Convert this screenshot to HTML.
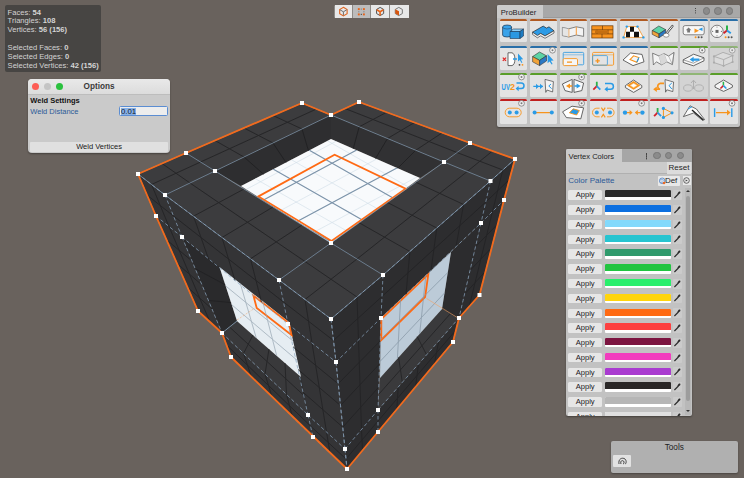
<!DOCTYPE html><html><head><meta charset="utf-8"><style>
*{margin:0;padding:0;box-sizing:border-box}
html,body{width:744px;height:478px;overflow:hidden;background:#69625d;font-family:"Liberation Sans",sans-serif}
.a{position:absolute}
.stats{left:5.2px;top:5.4px;width:96.3px;height:66.3px;background:#474543;border-radius:2px;color:#d4d4d4;font-size:7.6px;line-height:8.87px;padding:3.2px 0 0 2.4px;white-space:nowrap}
.stats b{font-weight:bold}
.win{border-radius:4px;overflow:hidden;box-shadow:0 1px 2px rgba(0,0,0,.35)}
.pbbtn{position:absolute;width:27.6px;height:23px;background:#e3e3e3;border-radius:1.5px;overflow:hidden}
.pbbtn i{position:absolute;left:0;top:0;width:100%;height:2px}
.row{position:absolute;left:2.5px;width:120px;height:10px}
.ap{position:absolute;left:0;top:0;width:34.3px;height:9.4px;background:#e6e6e6;border-radius:1.5px;font-size:7.6px;line-height:9.6px;text-align:center;color:#1a1a1a}
.sw{position:absolute;left:37px;top:0;width:66px;height:9.4px;background:#fff;border-radius:1px;overflow:hidden}
.sw i{position:absolute;left:0;top:0;width:100%;height:7px}
.ey{position:absolute;left:104.6px;top:-0.3px;width:9px;height:10px;background:#cbcbcb;border-radius:1px}
</style></head><body>
<svg width="744" height="478" viewBox="0 0 744 478" style="position:absolute;left:0;top:0">
<path d="M138.0,174.0 L186.0,153.0 L302.0,103.0 L331.0,115.0 L359.0,102.0 L470.0,143.0 L515.0,159.0 L490.5,181.0 L383.0,275.0 L331.0,319.0 L279.0,280.0 L165.0,195.0 Z M215.0,171.0 L331.0,115.0 L444.0,162.0 L331.0,243.0 Z" fill="#3c3c3e" fill-rule="evenodd"/>
<path d="M138.0,174.0 L165.0,195.0 L279.0,280.0 L331.0,319.0 L336.0,362.0 L345.0,449.0 L347.0,469.0 L313.0,437.0 L231.0,357.0 L222.0,333.0 L198.0,311.0 L156.0,216.0 Z M182.0,237.0 L288.0,324.0 L308.0,415.0 L222.0,333.0 Z" fill="#343436" fill-rule="evenodd"/>
<path d="M331.0,319.0 L383.0,275.0 L490.5,181.0 L515.0,159.0 L504.0,200.0 L479.5,295.0 L459.0,318.0 L453.0,342.0 L378.0,432.0 L347.0,469.0 L345.0,449.0 L336.0,362.0 Z M381.0,318.0 L481.0,223.0 L459.0,318.0 L378.0,410.0 Z" fill="#2d2d2f" fill-rule="evenodd"/>
<polygon points="215.0,171.0 331.0,115.0 331.0,139.0 241.0,186.0" fill="#2e2e30"/>
<polygon points="331.0,115.0 444.0,162.0 420.0,178.0 331.0,139.0" fill="#313133"/>
<clipPath id="fl"><polygon points="241.0,186.0 331.0,139.0 420.0,178.0 331.0,243.0"/></clipPath>
<polygon points="241.0,186.0 331.0,139.0 420.0,178.0 331.0,243.0" fill="#f8fafc"/>
<g clip-path="url(#fl)" stroke="#d0dde8" stroke-width="0.6">
<line x1="135.4" y1="149.8" x2="385.7" y2="292.6"/>
<line x1="135.4" y1="209.2" x2="385.7" y2="75.1"/>
<line x1="153.3" y1="140.3" x2="403.6" y2="283.1"/>
<line x1="153.3" y1="219.3" x2="403.6" y2="85.3"/>
<line x1="171.2" y1="130.7" x2="421.4" y2="273.5"/>
<line x1="171.2" y1="229.6" x2="421.4" y2="95.5"/>
<line x1="189.1" y1="121.1" x2="439.3" y2="263.9"/>
<line x1="189.1" y1="239.8" x2="439.3" y2="105.7"/>
<line x1="206.9" y1="111.5" x2="457.2" y2="254.3"/>
<line x1="206.9" y1="249.9" x2="457.2" y2="115.9"/>
<line x1="224.8" y1="102.0" x2="475.1" y2="244.8"/>
<line x1="224.8" y1="260.2" x2="475.1" y2="126.1"/>
<line x1="242.7" y1="92.4" x2="492.9" y2="235.2"/>
<line x1="242.7" y1="270.4" x2="492.9" y2="136.3"/>
<line x1="260.6" y1="82.8" x2="510.8" y2="225.6"/>
<line x1="260.6" y1="280.6" x2="510.8" y2="146.5"/>
<line x1="278.4" y1="73.2" x2="528.7" y2="216.0"/>
<line x1="278.4" y1="290.8" x2="528.7" y2="156.7"/>
<line x1="296.3" y1="63.7" x2="546.5" y2="206.5"/>
<line x1="296.3" y1="300.9" x2="546.5" y2="166.9"/>
<line x1="314.2" y1="54.1" x2="564.4" y2="196.9"/>
<line x1="314.2" y1="311.1" x2="564.4" y2="177.1"/>
<line x1="332.1" y1="44.5" x2="582.3" y2="187.3"/>
<line x1="332.1" y1="321.3" x2="582.3" y2="187.3"/>
</g>
<g clip-path="url(#fl)" stroke="#7b92a8" stroke-width="1.1">
<line x1="117.6" y1="159.4" x2="367.8" y2="302.2"/>
<line x1="117.6" y1="198.9" x2="367.8" y2="64.9"/>
<line x1="153.3" y1="140.3" x2="403.6" y2="283.1"/>
<line x1="153.3" y1="219.3" x2="403.6" y2="85.3"/>
<line x1="189.1" y1="121.1" x2="439.3" y2="263.9"/>
<line x1="189.1" y1="239.8" x2="439.3" y2="105.7"/>
<line x1="224.8" y1="102.0" x2="475.1" y2="244.8"/>
<line x1="224.8" y1="260.2" x2="475.1" y2="126.1"/>
<line x1="260.6" y1="82.8" x2="510.8" y2="225.6"/>
<line x1="260.6" y1="280.6" x2="510.8" y2="146.5"/>
<line x1="296.3" y1="63.7" x2="546.5" y2="206.5"/>
<line x1="296.3" y1="300.9" x2="546.5" y2="166.9"/>
</g>
<polygon points="258.5,196.4 334.6,154.8 405.6,188.7 331.5,241.0" fill="none" stroke="#ff6a14" stroke-width="1.8"/>
<polygon points="182.0,237.0 219.5,267.0 237.0,321.0 222.0,333.0" fill="#2a2a2c"/>
<polygon points="222.0,333.0 237.0,321.0 301.0,377.0 308.0,415.0" fill="#39393b"/>
<polygon points="288.0,324.0 308.0,415.0 301.0,377.0 289.0,322.0" fill="#2e2e30"/>
<polygon points="219.5,267.0 289.0,322.0 301.0,377.0 237.0,321.0" fill="#e6edf2"/>
<polygon points="253.5,295.8 288.8,323.0 291.5,335.0 256.7,308.0" fill="none" stroke="#ff6a14" stroke-width="1.8"/>
<polygon points="451.0,252.0 481.0,223.0 459.0,318.0 442.0,309.0" fill="#2c2c2e"/>
<polygon points="380.0,378.0 442.0,309.0 459.0,318.0 378.0,410.0" fill="#3a3a3c"/>
<polygon points="381.0,318.0 451.0,252.0 442.0,309.0 380.0,378.0" fill="#bccbd8"/>
<polygon points="381.3,319.0 428.3,274.4 425.1,297.0 381.3,340.0" fill="none" stroke="#ff6a14" stroke-width="1.8"/>
<g stroke="#9aa8b4" stroke-width="0.9" opacity="0.8"><line x1="240.3" y1="283.5" x2="256.2" y2="337.8"/><line x1="262.6" y1="301.1" x2="276.7" y2="355.7"/><line x1="225.6" y1="285.9" x2="293.2" y2="341.2"/><line x1="231.8" y1="304.8" x2="297.4" y2="360.5"/></g>
<g stroke="#8797a6" stroke-width="0.9" opacity="0.8"><line x1="400.6" y1="299.5" x2="397.4" y2="358.7"/><line x1="425.8" y1="275.8" x2="419.7" y2="333.8"/><line x1="380.6" y1="339.6" x2="447.8" y2="272.5"/><line x1="380.3" y1="361.2" x2="444.5" y2="293.0"/></g>
<g stroke="#1f1f21" stroke-width="1" opacity="0.8"><line x1="244.0" y1="157.0" x2="263.5" y2="174.2"/><line x1="273.0" y1="143.0" x2="286.0" y2="162.5"/><line x1="302.0" y1="129.0" x2="308.5" y2="150.8"/><line x1="359.2" y1="126.8" x2="353.2" y2="148.8"/><line x1="387.5" y1="138.5" x2="375.5" y2="158.5"/><line x1="415.8" y1="150.2" x2="397.8" y2="168.2"/></g>
<g stroke="#1f1f21" stroke-width="1" opacity="0.7"><line x1="253.0" y1="335.0" x2="243.5" y2="353.5"/><line x1="269.0" y1="349.0" x2="265.0" y2="374.0"/><line x1="285.0" y1="363.0" x2="286.5" y2="394.5"/><line x1="229.5" y1="327.0" x2="304.5" y2="396.0"/><line x1="398.6" y1="357.3" x2="402.3" y2="382.4"/><line x1="417.2" y1="336.6" x2="426.6" y2="354.8"/><line x1="379.0" y1="394.0" x2="450.5" y2="313.5"/><line x1="195.2" y1="268.7" x2="225.3" y2="284.8"/><line x1="208.4" y1="300.4" x2="231.1" y2="302.6"/></g>
<line x1="237" y1="320" x2="255" y2="308" stroke="#f7a060" stroke-width=".7" stroke-dasharray="2 1.5" opacity=".7"/>
<line x1="426.5" y1="298.5" x2="459" y2="318.6" stroke="#f7a060" stroke-width=".7" opacity=".8"/>
<g stroke="#242426" stroke-width="1" opacity="0.9"><line x1="162.0" y1="163.5" x2="190.0" y2="183.0"/><line x1="151.5" y1="184.5" x2="200.5" y2="162.0"/><line x1="215.0" y1="140.5" x2="244.0" y2="157.0"/><line x1="244.0" y1="128.0" x2="273.0" y2="143.0"/><line x1="273.0" y1="115.5" x2="302.0" y2="129.0"/><line x1="200.5" y1="162.0" x2="316.5" y2="109.0"/><line x1="190.0" y1="183.0" x2="305.0" y2="261.5"/><line x1="193.5" y1="216.2" x2="244.0" y2="189.0"/><line x1="222.0" y1="237.5" x2="273.0" y2="207.0"/><line x1="250.5" y1="258.8" x2="302.0" y2="225.0"/><line x1="345.0" y1="108.5" x2="457.0" y2="152.5"/><line x1="359.2" y1="126.8" x2="386.8" y2="112.2"/><line x1="387.5" y1="138.5" x2="414.5" y2="122.5"/><line x1="415.8" y1="150.2" x2="442.2" y2="132.8"/><line x1="305.0" y1="261.5" x2="357.0" y2="297.0"/><line x1="305.0" y1="299.5" x2="357.0" y2="259.0"/><line x1="359.2" y1="222.8" x2="409.9" y2="251.5"/><line x1="387.5" y1="202.5" x2="436.8" y2="228.0"/><line x1="415.8" y1="182.2" x2="463.6" y2="204.5"/><line x1="357.0" y1="259.0" x2="467.2" y2="171.5"/><line x1="457.0" y1="152.5" x2="502.8" y2="170.0"/><line x1="467.2" y1="171.5" x2="492.5" y2="151.0"/><line x1="151.5" y1="184.5" x2="169.0" y2="226.5"/><line x1="147.0" y1="195.0" x2="173.5" y2="216.0"/><line x1="193.5" y1="216.2" x2="208.5" y2="258.8"/><line x1="222.0" y1="237.5" x2="235.0" y2="280.5"/><line x1="250.5" y1="258.8" x2="261.5" y2="302.2"/><line x1="173.5" y1="216.0" x2="283.5" y2="302.0"/><line x1="305.0" y1="299.5" x2="312.0" y2="343.0"/><line x1="283.5" y1="302.0" x2="333.5" y2="340.5"/><line x1="169.0" y1="226.5" x2="210.0" y2="322.0"/><line x1="166.5" y1="239.8" x2="192.0" y2="261.0"/><line x1="177.0" y1="263.5" x2="202.0" y2="285.0"/><line x1="187.5" y1="287.2" x2="212.0" y2="309.0"/><line x1="312.0" y1="343.0" x2="326.5" y2="432.0"/><line x1="293.0" y1="346.8" x2="338.2" y2="383.8"/><line x1="298.0" y1="369.5" x2="340.5" y2="405.5"/><line x1="303.0" y1="392.2" x2="342.8" y2="427.2"/><line x1="243.5" y1="353.5" x2="251.5" y2="377.0"/><line x1="265.0" y1="374.0" x2="272.0" y2="397.0"/><line x1="286.5" y1="394.5" x2="292.5" y2="417.0"/><line x1="226.5" y1="345.0" x2="310.5" y2="426.0"/><line x1="326.5" y1="432.0" x2="330.0" y2="453.0"/><line x1="310.5" y1="426.0" x2="346.0" y2="459.0"/><line x1="357.0" y1="297.0" x2="358.5" y2="340.0"/><line x1="333.5" y1="340.5" x2="382.0" y2="296.5"/><line x1="409.9" y1="251.5" x2="406.0" y2="294.2"/><line x1="436.8" y1="228.0" x2="431.0" y2="270.5"/><line x1="463.6" y1="204.5" x2="456.0" y2="246.8"/><line x1="382.0" y1="296.5" x2="485.8" y2="202.0"/><line x1="502.8" y1="170.0" x2="492.5" y2="211.5"/><line x1="485.8" y1="202.0" x2="509.5" y2="179.5"/><line x1="358.5" y1="340.0" x2="361.5" y2="429.5"/><line x1="338.2" y1="383.8" x2="380.2" y2="341.0"/><line x1="340.5" y1="405.5" x2="379.5" y2="364.0"/><line x1="342.8" y1="427.2" x2="378.8" y2="387.0"/><line x1="492.5" y1="211.5" x2="469.2" y2="306.5"/><line x1="475.5" y1="246.8" x2="497.9" y2="223.8"/><line x1="470.0" y1="270.5" x2="491.8" y2="247.5"/><line x1="464.5" y1="294.2" x2="485.6" y2="271.2"/><line x1="361.5" y1="429.5" x2="362.5" y2="450.5"/><line x1="346.0" y1="459.0" x2="378.0" y2="421.0"/><line x1="398.2" y1="387.0" x2="396.8" y2="409.5"/><line x1="418.5" y1="364.0" x2="415.5" y2="387.0"/><line x1="438.8" y1="341.0" x2="434.2" y2="364.5"/><line x1="378.0" y1="421.0" x2="456.0" y2="330.0"/></g>
<g stroke="#87a2bb" stroke-width="0.9" opacity="0.7"><line x1="138.0" y1="174.0" x2="186.0" y2="153.0"/><line x1="186.0" y1="153.0" x2="302.0" y2="103.0"/><line x1="165.0" y1="195.0" x2="215.0" y2="171.0"/><line x1="215.0" y1="171.0" x2="331.0" y2="115.0"/><line x1="331.0" y1="115.0" x2="359.0" y2="102.0"/><line x1="279.0" y1="280.0" x2="331.0" y2="243.0"/><line x1="331.0" y1="243.0" x2="444.0" y2="162.0"/><line x1="444.0" y1="162.0" x2="470.0" y2="143.0"/><line x1="331.0" y1="319.0" x2="383.0" y2="275.0"/><line x1="383.0" y1="275.0" x2="490.5" y2="181.0"/><line x1="490.5" y1="181.0" x2="515.0" y2="159.0"/><line x1="138.0" y1="174.0" x2="165.0" y2="195.0"/><line x1="165.0" y1="195.0" x2="279.0" y2="280.0"/><line x1="279.0" y1="280.0" x2="331.0" y2="319.0"/><line x1="186.0" y1="153.0" x2="215.0" y2="171.0"/><line x1="215.0" y1="171.0" x2="331.0" y2="243.0"/><line x1="331.0" y1="243.0" x2="383.0" y2="275.0"/><line x1="302.0" y1="103.0" x2="331.0" y2="115.0"/><line x1="331.0" y1="115.0" x2="444.0" y2="162.0"/><line x1="444.0" y1="162.0" x2="490.5" y2="181.0"/><line x1="359.0" y1="102.0" x2="470.0" y2="143.0"/><line x1="470.0" y1="143.0" x2="515.0" y2="159.0"/></g>
<g stroke="#8aa5bf" stroke-width="0.9" opacity="0.8" stroke-dasharray="3.5 2.5"><line x1="138.0" y1="174.0" x2="165.0" y2="195.0"/><line x1="165.0" y1="195.0" x2="279.0" y2="280.0"/><line x1="279.0" y1="280.0" x2="331.0" y2="319.0"/><line x1="156.0" y1="216.0" x2="182.0" y2="237.0"/><line x1="182.0" y1="237.0" x2="288.0" y2="324.0"/><line x1="288.0" y1="324.0" x2="336.0" y2="362.0"/><line x1="198.0" y1="311.0" x2="222.0" y2="333.0"/><line x1="222.0" y1="333.0" x2="308.0" y2="415.0"/><line x1="308.0" y1="415.0" x2="345.0" y2="449.0"/><line x1="231.0" y1="357.0" x2="313.0" y2="437.0"/><line x1="313.0" y1="437.0" x2="347.0" y2="469.0"/><line x1="138.0" y1="174.0" x2="156.0" y2="216.0"/><line x1="156.0" y1="216.0" x2="198.0" y2="311.0"/><line x1="165.0" y1="195.0" x2="182.0" y2="237.0"/><line x1="182.0" y1="237.0" x2="222.0" y2="333.0"/><line x1="222.0" y1="333.0" x2="231.0" y2="357.0"/><line x1="279.0" y1="280.0" x2="288.0" y2="324.0"/><line x1="288.0" y1="324.0" x2="308.0" y2="415.0"/><line x1="308.0" y1="415.0" x2="313.0" y2="437.0"/><line x1="331.0" y1="319.0" x2="336.0" y2="362.0"/><line x1="336.0" y1="362.0" x2="345.0" y2="449.0"/><line x1="345.0" y1="449.0" x2="347.0" y2="469.0"/><line x1="331.0" y1="319.0" x2="383.0" y2="275.0"/><line x1="383.0" y1="275.0" x2="490.5" y2="181.0"/><line x1="490.5" y1="181.0" x2="515.0" y2="159.0"/><line x1="336.0" y1="362.0" x2="381.0" y2="318.0"/><line x1="381.0" y1="318.0" x2="481.0" y2="223.0"/><line x1="481.0" y1="223.0" x2="504.0" y2="200.0"/><line x1="345.0" y1="449.0" x2="378.0" y2="410.0"/><line x1="378.0" y1="410.0" x2="459.0" y2="318.0"/><line x1="459.0" y1="318.0" x2="479.5" y2="295.0"/><line x1="347.0" y1="469.0" x2="378.0" y2="432.0"/><line x1="378.0" y1="432.0" x2="453.0" y2="342.0"/><line x1="331.0" y1="319.0" x2="336.0" y2="362.0"/><line x1="336.0" y1="362.0" x2="345.0" y2="449.0"/><line x1="345.0" y1="449.0" x2="347.0" y2="469.0"/><line x1="383.0" y1="275.0" x2="381.0" y2="318.0"/><line x1="381.0" y1="318.0" x2="378.0" y2="410.0"/><line x1="378.0" y1="410.0" x2="378.0" y2="432.0"/><line x1="490.5" y1="181.0" x2="481.0" y2="223.0"/><line x1="481.0" y1="223.0" x2="459.0" y2="318.0"/><line x1="459.0" y1="318.0" x2="453.0" y2="342.0"/><line x1="515.0" y1="159.0" x2="504.0" y2="200.0"/><line x1="504.0" y1="200.0" x2="479.5" y2="295.0"/></g>
<line x1="222" y1="333" x2="237" y2="321" stroke="#87a2bb" stroke-width="1" opacity=".8"/>
<polygon points="138.0,174.0 186.0,153.0 302.0,103.0 331.0,115.0 359.0,102.0 470.0,143.0 515.0,159.0 504.0,200.0 479.5,295.0 459.0,318.0 453.0,342.0 347.0,469.0 231.0,357.0 222.0,333.0 198.0,311.0 156.0,216.0" fill="none" stroke="#f26a1c" stroke-width="1.8" stroke-linejoin="round"/>
<g fill="#ffffff"><rect x="136.0" y="172.0" width="4" height="4"/><rect x="184.0" y="151.0" width="4" height="4"/><rect x="300.0" y="101.0" width="4" height="4"/><rect x="329.0" y="113.0" width="4" height="4"/><rect x="357.0" y="100.0" width="4" height="4"/><rect x="468.0" y="141.0" width="4" height="4"/><rect x="513.0" y="157.0" width="4" height="4"/><rect x="502.0" y="198.0" width="4" height="4"/><rect x="477.5" y="293.0" width="4" height="4"/><rect x="457.0" y="316.0" width="4" height="4"/><rect x="451.0" y="340.0" width="4" height="4"/><rect x="345.0" y="467.0" width="4" height="4"/><rect x="229.0" y="355.0" width="4" height="4"/><rect x="220.0" y="331.0" width="4" height="4"/><rect x="196.0" y="309.0" width="4" height="4"/><rect x="154.0" y="214.0" width="4" height="4"/><rect x="163.0" y="193.0" width="4" height="4"/><rect x="213.0" y="169.0" width="4" height="4"/><rect x="442.0" y="160.0" width="4" height="4"/><rect x="329.0" y="241.0" width="4" height="4"/><rect x="277.0" y="278.0" width="4" height="4"/><rect x="329.0" y="317.0" width="4" height="4"/><rect x="381.0" y="273.0" width="4" height="4"/><rect x="488.5" y="179.0" width="4" height="4"/><rect x="180.0" y="235.0" width="4" height="4"/><rect x="286.0" y="322.0" width="4" height="4"/><rect x="334.0" y="360.0" width="4" height="4"/><rect x="306.0" y="413.0" width="4" height="4"/><rect x="343.0" y="447.0" width="4" height="4"/><rect x="311.0" y="435.0" width="4" height="4"/><rect x="379.0" y="316.0" width="4" height="4"/><rect x="479.0" y="221.0" width="4" height="4"/><rect x="376.0" y="408.0" width="4" height="4"/><rect x="376.0" y="430.0" width="4" height="4"/></g>
</svg>
<div class="a stats"><div>Faces: <b>54</b></div><div>Triangles: <b>108</b></div><div>Vertices: <b>56 (156)</b></div><div>&nbsp;</div><div>Selected Faces: <b>0</b></div><div>Selected Edges: <b>0</b></div><div>Selected Vertices: <b>42 (156)</b></div></div>
<div class="a win" style="left:28px;top:78.5px;width:142px;height:74.5px;background:#cacaca">
 <div class="a" style="left:0;top:0;width:142px;height:16px;background:linear-gradient(#e9e9e9,#dcdcdc);border-bottom:1px solid #bdbdbd"></div>
 <div class="a" style="left:4.2px;top:4.1px;width:7px;height:7px;border-radius:50%;background:#fd5d55"></div>
 <div class="a" style="left:16px;top:4.1px;width:7px;height:7px;border-radius:50%;background:#c4c4c4"></div>
 <div class="a" style="left:28.1px;top:4.1px;width:7px;height:7px;border-radius:50%;background:#2ac13e"></div>
 <div class="a" style="left:0;top:3.4px;width:142px;text-align:center;font-size:8.2px;font-weight:bold;color:#3a3a3a;padding-left:0">Options</div>
 <div class="a" style="left:2.3px;top:17.4px;font-size:7.5px;font-weight:bold;color:#111">Weld Settings</div>
 <div class="a" style="left:2.3px;top:28.6px;font-size:7.5px;color:#2c5a98">Weld Distance</div>
 <div class="a" style="left:91.4px;top:27.6px;width:49px;height:10.1px;background:#ededed;border:1px solid #5b8dd2;border-radius:1.5px"></div>
 <div class="a" style="left:93px;top:29.3px;width:14.5px;height:7px;background:#87b0e6"></div>
 <div class="a" style="left:93px;top:28.3px;font-size:7.8px;color:#101828">0.01</div>
 <div class="a" style="left:1.7px;top:63.5px;width:138.7px;height:9.7px;background:#e0e0e0;border-radius:1px;text-align:center;font-size:7.5px;line-height:10.4px;color:#1a1a1a">Weld Vertices</div>
</div>
<div class="a" style="left:333.8px;top:4.8px;width:75.6px;height:13.6px;background:#8e8a86;border-radius:1.5px"></div><div class="a" style="left:334.5px;top:5.4px;width:17.5px;height:12.4px;background:#e8e8e8"></div><div class="a" style="left:352.6px;top:5.4px;width:17.8px;height:12.4px;background:#bcbcbc"></div><div class="a" style="left:371.0px;top:5.4px;width:18.2px;height:12.4px;background:#e8e8e8"></div><div class="a" style="left:390.2px;top:5.4px;width:18.6px;height:12.4px;background:#e8e8e8"></div><svg class="a" style="left:0;top:0" width="420" height="22" viewBox="0 0 420 22"><path d="M343.40 7.30 L347.12 9.45 L347.12 13.75 L343.40 15.90 L339.68 13.75 L339.68 9.45 Z" fill="none" stroke="#e0641e" stroke-width="1.1"/><path d="M343.4 11.8 V15.4 M343.4 11.8 L340 9.8 M343.4 11.8 L346.8 9.8" stroke="#6f6f6f" stroke-width="1"/><rect x="357.85" y="8.15" width="1.9" height="1.9" fill="#e8641a"/><rect x="362.95" y="8.15" width="1.9" height="1.9" fill="#e8641a"/><rect x="357.85" y="13.45" width="1.9" height="1.9" fill="#e8641a"/><rect x="362.95" y="13.45" width="1.9" height="1.9" fill="#e8641a"/><rect x="360.75" y="8.50" width="1.2" height="1.2" fill="#8a8a8a"/><rect x="358.20" y="11.15" width="1.2" height="1.2" fill="#8a8a8a"/><rect x="363.30" y="11.15" width="1.2" height="1.2" fill="#8a8a8a"/><rect x="360.75" y="13.80" width="1.2" height="1.2" fill="#555"/><path d="M380.10 7.40 L383.65 9.45 L383.65 13.55 L380.10 15.60 L376.55 13.55 L376.55 9.45 Z" fill="none" stroke="#555" stroke-width="1"/><path d="M380.1 11.8 V15.4 M380.1 11.8 L376.8 9.8 M380.1 11.8 L383.4 9.8" stroke="#e8641a" stroke-width="1.6"/><path d="M398.80 7.40 L402.35 9.45 L402.35 13.55 L398.80 15.60 L395.25 13.55 L395.25 9.45 Z" fill="none" stroke="#777" stroke-width="1"/><path d="M395.3 9.2 L399 11.2 V15.4 L395.3 13.4 Z" fill="#d9560e"/></svg>
<div class="a win" style="left:497px;top:5px;width:243px;height:122px;background:#c2c2c2;border-radius:2px"><div class="a" style="left:0;top:0;width:243px;height:12.5px;background:#a8a8a8;border-bottom:1px solid #9a9a9a"></div><div class="a" style="left:0;top:0;width:46px;height:13px;background:#cbcbcb;font-size:7.6px;line-height:15px;padding-left:3.8px;color:#1e1e1e">ProBuilder</div><div class="a" style="left:198.2px;top:3px;width:1.2px;height:1.2px;background:#444;box-shadow:0 2.2px #444,0 4.4px #444"></div><div class="a" style="left:205.5px;top:2.2px;width:7.4px;height:7.4px;border-radius:50%;background:#8b8b8b;border:.6px solid #777"></div><div class="a" style="left:217.3px;top:2.2px;width:7.4px;height:7.4px;border-radius:50%;background:#8b8b8b;border:.6px solid #777"></div><div class="a" style="left:229.0px;top:2.2px;width:7.4px;height:7.4px;border-radius:50%;background:#8b8b8b;border:.6px solid #777"></div><div class="pbbtn" style="left:2.6px;top:14.3px;height:23.1px;background:#e3e3e3"><i style="background:#b05a22;opacity:1"></i><svg width="28" height="23" viewBox="0 0 28 23" style="position:absolute;left:0;top:0;opacity:1"><path d="M2.6 8 A4.5 2 0 0 1 11.6 8 V16 A4.5 2 0 0 1 2.6 16 Z" fill="#3aa3ea" stroke="#1d3550" stroke-width=".7"/><path d="M2.6 8 A4.5 2 0 0 0 11.6 8" fill="none" stroke="#1d3550" stroke-width=".5"/><path d="M10 12.5 L13.5 10 L23.5 10 L20 12.5 Z" fill="#8fd0f7" stroke="#1d3550" stroke-width=".6"/><path d="M10 12.5 H20 V19.5 H10 Z" fill="#2a98e2" stroke="#1d3550" stroke-width=".6"/><path d="M20 12.5 L23.5 10 V17 L20 19.5 Z" fill="#1e7cc2" stroke="#1d3550" stroke-width=".6"/></svg></div><div class="pbbtn" style="left:32.7px;top:14.3px;height:23.1px;background:#e3e3e3"><i style="background:#b05a22;opacity:1"></i><svg width="28" height="23" viewBox="0 0 28 23" style="position:absolute;left:0;top:0;opacity:1"><path d="M2.5 13.2 L13.2 7.1 L16.5 9.1 L19 7.8 L24 11.8 L15 17 L10.7 14.5 L7.4 16.6 Z" fill="#2d9be6" stroke="#2a2a2a" stroke-width=".7"/><path d="M2.5 13.2 L7.4 16.6 L10.7 14.5 L15 17 L24 11.8 L24 14 L15 19.3 L10.7 16.8 L7.4 18.8 L2.5 15.4 Z" fill="#f4f4f4" stroke="#2a2a2a" stroke-width=".6"/></svg></div><div class="pbbtn" style="left:62.8px;top:14.3px;height:23.1px;background:#e3e3e3"><i style="background:#b05a22;opacity:1"></i><svg width="28" height="23" viewBox="0 0 28 23" style="position:absolute;left:0;top:0;opacity:1"><path d="M2.4 8.4 L8.8 9.8 L16.3 7.8 L23.6 9.2 L23.6 17.4 L16.3 16 L8.8 18 L2.4 16.6 Z" fill="#f3f3f3" stroke="#555" stroke-width=".7"/><path d="M8.8 9.8 V18 M16.3 7.8 V16" stroke="#f79a3a" stroke-width="1"/><path d="M2.4 8.4 L8.8 9.8 V18 L2.4 16.6 Z" fill="#dcdcdc" opacity=".6"/></svg></div><div class="pbbtn" style="left:92.9px;top:14.3px;height:23.1px;background:#e3e3e3"><i style="background:#b05a22;opacity:1"></i><svg width="28" height="23" viewBox="0 0 28 23" style="position:absolute;left:0;top:0;opacity:1"><rect x="1.8" y="6.8" width="21.2" height="12.2" fill="#f7931e" stroke="#6a3a08" stroke-width=".7"/><path d="M1.8 10.8 H23 M1.8 14.9 H23 M12.5 6.8 V10.8 M18 10.8 V14.9 M7 10.8 V14.9 M12 14.9 V19" stroke="#6a3a08" stroke-width=".7"/><rect x="5" y="11.3" width="12.5" height="3" fill="#c46e10"/></svg></div><div class="pbbtn" style="left:123.0px;top:14.3px;height:23.1px;background:#e3e3e3"><i style="background:#b05a22;opacity:1"></i><svg width="28" height="23" viewBox="0 0 28 23" style="position:absolute;left:0;top:0;opacity:1"><path d="M6.8 7.6 L17.5 7.6 L23.4 18.4 L3.6 18.4 Z" fill="#fff" stroke="#f19a3a" stroke-width=".9"/><path d="M10 7.8 H14 V12.8 H10 Z M6 12.8 H10 V18.3 H6 Z M14 12.8 H19 V18.3 H14 Z" fill="#111"/><g fill="#2a9be6"><circle cx="6.8" cy="7.6" r="1.2"/><circle cx="17.5" cy="7.6" r="1.2"/><circle cx="3.6" cy="18.4" r="1.2"/><circle cx="23.4" cy="18.4" r="1.2"/></g></svg></div><div class="pbbtn" style="left:153.1px;top:14.3px;height:23.1px;background:#e3e3e3"><i style="background:#b05a22;opacity:1"></i><svg width="28" height="23" viewBox="0 0 28 23" style="position:absolute;left:0;top:0;opacity:1"><path d="M2.2 11.5 L8.8 7 L15.6 10.6 L9 15 Z" fill="#5cd3a5" stroke="#333" stroke-width=".6"/><path d="M2.2 11.5 L9 15 V18.8 L2.2 15.3 Z" fill="#f0a33a" stroke="#333" stroke-width=".6"/><path d="M15.6 10.6 L9 15 V18.8 L15.6 14.4 Z" fill="#2a78c4" stroke="#333" stroke-width=".6"/><path d="M16 15 L22.5 7" stroke="#444" stroke-width="2.2" stroke-linecap="round"/><path d="M16 15 L22.5 7" stroke="#fff" stroke-width="1" stroke-linecap="round"/><ellipse cx="16.2" cy="16.2" rx="2.8" ry="2" fill="#fff" stroke="#555" stroke-width=".6"/></svg></div><div class="pbbtn" style="left:183.2px;top:14.3px;height:23.1px;background:#e3e3e3"><i style="background:#2a6fa8;opacity:1"></i><svg width="28" height="23" viewBox="0 0 28 23" style="position:absolute;left:0;top:0;opacity:1"><rect x="3.2" y="6.6" width="21" height="9.2" rx="2" fill="#f7f7f7" stroke="#555" stroke-width=".7"/><path d="M8.6 8.5 L11.4 11.2 H10 V13.4 H7.2 V11.2 H5.8 Z" fill="#777"/><path d="M14.5 9.5 L19 11.8 L14.5 14 Z" fill="#f7941d"/><path d="M22.5 8.6 L18.5 10.3 L22.5 12 Z" fill="#2a9be6"/><circle cx="15.6" cy="18.2" r="1" fill="#f7941d"/><circle cx="18.6" cy="18.2" r="1" fill="#555"/><circle cx="21.6" cy="18.2" r="1" fill="#555"/></svg></div><div class="pbbtn" style="left:213.3px;top:14.3px;height:23.1px;background:#e3e3e3"><i style="background:#2a6fa8;opacity:1"></i><svg width="28" height="23" viewBox="0 0 28 23" style="position:absolute;left:0;top:0;opacity:1"><circle cx="7" cy="12.4" r="6.2" fill="#f6f6f6" stroke="#555" stroke-width=".7"/><rect x="5.5" y="10.9" width="3" height="3" fill="#666"/><g fill="#777"><circle cx="7" cy="8" r=".6"/><circle cx="7" cy="16.8" r=".6"/><circle cx="2.6" cy="12.4" r=".6"/><circle cx="11.4" cy="12.4" r=".6"/></g><path d="M17 11.5 L17 6.5" stroke="#2bb24a" stroke-width="2"/><path d="M17 11.5 L13.6 14.2" stroke="#d2232a" stroke-width="2"/><path d="M17 11.5 L20.8 14.2" stroke="#2a9be6" stroke-width="2"/><circle cx="15.6" cy="18.2" r="1" fill="#f7941d"/><circle cx="18.6" cy="18.2" r="1" fill="#555"/><circle cx="21.6" cy="18.2" r="1" fill="#555"/></svg></div><div class="pbbtn" style="left:2.6px;top:41.0px;height:23.8px;background:#e3e3e3"><i style="background:#2a6fa8;opacity:1"></i><svg width="28" height="23" viewBox="0 0 28 23" style="position:absolute;left:0;top:0;opacity:1"><path d="M2.8 11.6 L6 14.9 M6 11.6 L2.8 14.9" stroke="#e02828" stroke-width="1.3"/><path d="M8 6.8 L12 6.8 A3.5 6.5 0 0 1 12 19.6 L8 19.6 Z" fill="#fff" stroke="#444" stroke-width=".8"/><path d="M13 13 H17" stroke="#2a9be6" stroke-width="1.3"/><path d="M18 7.4 L18 15.6 L19.8 14 L21.6 17 L22.4 16.5 L20.8 13.6 L23.2 13.2 Z" fill="#2a9be6"/><circle cx="19.5" cy="18.8" r=".9" fill="#444"/><circle cx="22.5" cy="18.8" r=".9" fill="#f7941d"/></svg></div><div class="pbbtn" style="left:32.7px;top:41.0px;height:23.8px;background:#e3e3e3"><i style="background:#2a6fa8;opacity:1"></i><svg width="28" height="23" viewBox="0 0 28 23" style="position:absolute;left:0;top:0;opacity:1"><path d="M2.6 10.6 L9.5 6 L16.5 9.8 L9.6 14.4 Z" fill="#5cd3a5" stroke="#333" stroke-width=".6"/><path d="M2.6 10.6 L9.6 14.4 V19.6 L2.6 15.8 Z" fill="#f0a33a" stroke="#333" stroke-width=".6"/><path d="M16.5 9.8 L9.6 14.4 V19.6 L16.5 15 Z" fill="#2a78c4" stroke="#333" stroke-width=".6"/><path d="M17.6 8 L17.6 17.2 L19.6 15.4 L21.6 18.6 L22.6 18 L20.8 14.8 L23.6 14.6 Z" fill="#2a9be6"/><circle cx="22.5" cy="4.2" r="2.9" fill="#f2f2f2" stroke="#7a7a7a" stroke-width=".8"/><circle cx="22.5" cy="4.2" r="1" fill="#7a7a7a"/></svg></div><div class="pbbtn" style="left:62.8px;top:41.0px;height:23.8px;background:#e3e3e3"><i style="background:#2a6fa8;opacity:1"></i><svg width="28" height="23" viewBox="0 0 28 23" style="position:absolute;left:0;top:0;opacity:1"><rect x="3.2" y="6.4" width="20.5" height="12.4" rx="1" fill="none" stroke="#3a9de0" stroke-width=".9"/><path d="M3.2 8.8 H23.7" stroke="#3a9de0" stroke-width=".5"/><rect x="3.2" y="12.6" width="14.3" height="7" rx="1.2" fill="#f6f6f6" stroke="#f7941d" stroke-width=".9"/><path d="M7 16.1 H12" stroke="#f7941d" stroke-width="1.4"/></svg></div><div class="pbbtn" style="left:92.9px;top:41.0px;height:23.8px;background:#e3e3e3"><i style="background:#2a6fa8;opacity:1"></i><svg width="28" height="23" viewBox="0 0 28 23" style="position:absolute;left:0;top:0;opacity:1"><rect x="2.6" y="6.4" width="21" height="12.8" rx="1" fill="none" stroke="#f7941d" stroke-width=".9"/><path d="M2.6 8.8 H23.6" stroke="#f7941d" stroke-width=".5"/><rect x="2.6" y="9.6" width="14.8" height="9.6" rx="1" fill="none" stroke="#3a9de0" stroke-width=".8"/><path d="M5.4 14.9 H9.8 M7.6 12.7 V17.1" stroke="#f7941d" stroke-width="1.4"/></svg></div><div class="pbbtn" style="left:123.0px;top:41.0px;height:23.8px;background:#e3e3e3"><i style="background:#2a6fa8;opacity:1"></i><svg width="28" height="23" viewBox="0 0 28 23" style="position:absolute;left:0;top:0;opacity:1"><path d="M3 14 L10.5 7 L22 8.4 L24 15.8 L13 19.6 Z" fill="#fff" stroke="#444" stroke-width=".8"/><path d="M10 13.6 L13.6 9.8 L18.8 11.6 L16.8 16.2 Z" fill="#f0f6fb" stroke="#f7941d" stroke-width="1.1"/><path d="M16.8 16.2 L18.8 11.6 L18.2 13.8 Z" fill="#2a9be6" stroke="#2a9be6" stroke-width=".8"/></svg></div><div class="pbbtn" style="left:153.1px;top:41.0px;height:23.8px;background:#e3e3e3"><i style="background:#5a9e2a;opacity:1"></i><svg width="28" height="23" viewBox="0 0 28 23" style="position:absolute;left:0;top:0;opacity:1"><path d="M2.6 7.2 L9 10 L14 7.6 L18.6 10 L24 6.4 L22.4 18.6 L16.8 15.8 L11.6 18.8 L6.4 15.8 L3.4 19 Z" fill="#f4f4f4" stroke="#555" stroke-width=".7"/><path d="M9 10 L11.6 18.8 M14 7.6 L16.8 15.8 M18.6 10 L22.4 18.6 L24 6.4" stroke="#888" stroke-width=".5" fill="none"/><path d="M9 10 L14 7.6 L16.8 15.8 L11.6 18.8 Z" fill="#d8d8d8"/></svg></div><div class="pbbtn" style="left:183.2px;top:41.0px;height:23.8px;background:#e3e3e3"><i style="background:#5a9e2a;opacity:1"></i><svg width="28" height="23" viewBox="0 0 28 23" style="position:absolute;left:0;top:0;opacity:1"><path d="M3.2 13.8 L13.6 8.2 L24 11.8 L24 14.8 L13.4 19.8 L3.2 16.4 Z" fill="#f8f8f8" stroke="#444" stroke-width=".8"/><path d="M3.2 13.8 L13.4 17.2 L24 11.8" fill="none" stroke="#444" stroke-width=".5"/><path d="M9.6 13.4 L13.6 10.8 V12.4 H19.4 V14.8 H13.6 V16.2 Z" fill="#2a9be6"/><circle cx="22.2" cy="4.2" r="2.9" fill="#f2f2f2" stroke="#7a7a7a" stroke-width=".8"/><circle cx="22.2" cy="4.2" r="1" fill="#7a7a7a"/></svg></div><div class="pbbtn" style="left:213.3px;top:41.0px;height:23.8px;background:#d3d3d3"><i style="background:#5a9e2a;opacity:0.55"></i><svg width="28" height="23" viewBox="0 0 28 23" style="position:absolute;left:0;top:0;opacity:0.7"><path d="M4 10.4 L13 6.4 L22.6 9.6 L22.6 16 L13.6 19.8 L4 16.6 Z" fill="#dedede" stroke="#9a9a9a" stroke-width=".9"/><path d="M4 10.4 L13.6 13.6 L22.6 9.6 M13.6 13.6 V19.8" fill="none" stroke="#9a9a9a" stroke-width=".9"/><g fill="#9a9a9a"><circle cx="4" cy="10.4" r="1.1"/><circle cx="22.6" cy="9.6" r="1.1"/><circle cx="4" cy="16.6" r="1.1"/><circle cx="22.6" cy="16" r="1.1"/><circle cx="13.6" cy="19.8" r="1.1"/></g><circle cx="22.2" cy="4.2" r="2.9" fill="#f2f2f2" stroke="#7a7a7a" stroke-width=".8"/><circle cx="22.2" cy="4.2" r="1" fill="#7a7a7a"/></svg></div><div class="pbbtn" style="left:2.6px;top:68.0px;height:24.0px;background:#e3e3e3"><i style="background:#5a9e2a;opacity:1"></i><svg width="28" height="23" viewBox="0 0 28 23" style="position:absolute;left:0;top:0;opacity:1"><text x="1.6" y="17" font-size="9" font-weight="bold" fill="#2a9be6" font-family="Liberation Sans" textLength="8.4" lengthAdjust="spacingAndGlyphs">UV</text><text x="10" y="17" font-size="9" font-weight="bold" fill="#f7941d" font-family="Liberation Sans">2</text><path d="M16.5 10 H21.2 A2.8 2.8 0 0 1 21.2 15.6 H18" fill="none" stroke="#2a9be6" stroke-width="1.5"/><path d="M15.6 15.6 L18.6 13 V18.2 Z" fill="#2a9be6"/><circle cx="21.5" cy="4" r="2.9" fill="#f2f2f2" stroke="#7a7a7a" stroke-width=".8"/><circle cx="21.5" cy="4" r="1" fill="#7a7a7a"/></svg></div><div class="pbbtn" style="left:32.7px;top:68.0px;height:24.0px;background:#e3e3e3"><i style="background:#5a9e2a;opacity:1"></i><svg width="28" height="23" viewBox="0 0 28 23" style="position:absolute;left:0;top:0;opacity:1"><path d="M3.3 13.4 H13" stroke="#2a9be6" stroke-width="1.2"/><path d="M6 10.8 L9 13.4 L6 16 Z M10 10.8 L13 13.4 L10 16 Z" fill="#2a9be6"/><path d="M15 6.4 L23.4 8.6 L22.6 19 L17 17 L15.8 19.4 Z" fill="#f4f4f4" stroke="#444" stroke-width=".7"/><path d="M21 11 L18.8 13 L21.6 15.6" fill="none" stroke="#2a9be6" stroke-width="1"/></svg></div><div class="pbbtn" style="left:62.8px;top:68.0px;height:24.0px;background:#e3e3e3"><i style="background:#5a9e2a;opacity:1"></i><svg width="28" height="23" viewBox="0 0 28 23" style="position:absolute;left:0;top:0;opacity:1"><path d="M2.4 11 L12.2 6.4 V19.4 L5 17.6 Z" fill="#fafafa" stroke="#444" stroke-width=".8"/><path d="M14 6.4 L23.6 10 L21.8 17.6 L14 19.4 Z" fill="#fafafa" stroke="#444" stroke-width=".8"/><path d="M6 13 L10 10.4 V15.6 Z" fill="#f7941d"/><path d="M8 13 H12" stroke="#f7941d" stroke-width="1.4"/><path d="M20.6 13 L16.6 10.4 V15.6 Z" fill="#2a9be6"/><path d="M14.4 13 H18" stroke="#2a9be6" stroke-width="1.4"/><circle cx="21.6" cy="4" r="2.9" fill="#f2f2f2" stroke="#7a7a7a" stroke-width=".8"/><circle cx="21.6" cy="4" r="1" fill="#7a7a7a"/></svg></div><div class="pbbtn" style="left:92.9px;top:68.0px;height:24.0px;background:#e3e3e3"><i style="background:#5a9e2a;opacity:1"></i><svg width="28" height="23" viewBox="0 0 28 23" style="position:absolute;left:0;top:0;opacity:1"><path d="M6.8 13.2 L6.8 8.7" stroke="#2bb24a" stroke-width="1.8"/><path d="M6.8 13.2 L3.3 16.7" stroke="#d2232a" stroke-width="1.8"/><path d="M6.8 13.2 L10.3 16.7" stroke="#2a9be6" stroke-width="1.8"/><path d="M15 10.6 H20.6 A2.8 2.8 0 0 1 20.6 16.2 H17" fill="none" stroke="#2a9be6" stroke-width="1.5"/><path d="M14.4 16.2 L17.6 13.6 V18.8 Z" fill="#2a9be6"/></svg></div><div class="pbbtn" style="left:123.0px;top:68.0px;height:24.0px;background:#e3e3e3"><i style="background:#5a9e2a;opacity:1"></i><svg width="28" height="23" viewBox="0 0 28 23" style="position:absolute;left:0;top:0;opacity:1"><path d="M5.4 12.6 L13.6 7 L21.8 12.6 V14.6 L13.6 19.4 L5.4 14.6 Z" fill="#f6f6f6" stroke="#444" stroke-width=".8"/><path d="M8.4 12.4 L13.6 9 L18.8 12.4 L13.6 15.8 Z" fill="#f9d7a8" stroke="#f7941d" stroke-width="1.6"/><path d="M11 12.4 L13.6 10.8 L16.2 12.4 L13.6 14 Z" fill="#fff"/></svg></div><div class="pbbtn" style="left:153.1px;top:68.0px;height:24.0px;background:#e3e3e3"><i style="background:#5a9e2a;opacity:1"></i><svg width="28" height="23" viewBox="0 0 28 23" style="position:absolute;left:0;top:0;opacity:1"><path d="M14 10.4 H10 A3 3 0 0 0 10 16.2 H5.4" fill="none" stroke="#f7941d" stroke-width="1.6"/><path d="M3.2 16.2 L6.8 13.4 V19 Z" fill="#f7941d"/><path d="M15 6.6 L23.6 9 L22.8 18.6 L16.8 16.8 L15.6 19.2 Z" fill="#f4f4f4" stroke="#444" stroke-width=".7"/><path d="M21.8 10 L19 12.6 L21.8 16" fill="none" stroke="#2a9be6" stroke-width="1"/></svg></div><div class="pbbtn" style="left:183.2px;top:68.0px;height:24.0px;background:#d3d3d3"><i style="background:#5a9e2a;opacity:0.55"></i><svg width="28" height="23" viewBox="0 0 28 23" style="position:absolute;left:0;top:0;opacity:0.7"><ellipse cx="8" cy="15" rx="4.4" ry="3.2" fill="none" stroke="#a0a0a0" stroke-width=".9"/><ellipse cx="19" cy="15" rx="4.4" ry="3.2" fill="none" stroke="#a0a0a0" stroke-width=".9"/><path d="M13.5 16 V7.5 M11 10 L13.5 7.2 L16 10" fill="none" stroke="#a0a0a0" stroke-width="1"/></svg></div><div class="pbbtn" style="left:213.3px;top:68.0px;height:24.0px;background:#e3e3e3"><i style="background:#5a9e2a;opacity:1"></i><svg width="28" height="23" viewBox="0 0 28 23" style="position:absolute;left:0;top:0;opacity:1"><path d="M5 12.2 L13.6 7 L22.4 12.2 V14.2 L13.6 18.4 L5 14.2 Z" fill="#f6f6f6" stroke="#444" stroke-width=".8"/><path d="M13.4 12.6 L13.4 8.775" stroke="#2bb24a" stroke-width="1.53"/><path d="M13.4 12.6 L10.425 15.575" stroke="#d2232a" stroke-width="1.53"/><path d="M13.4 12.6 L16.375 15.575" stroke="#2a9be6" stroke-width="1.53"/></svg></div><div class="pbbtn" style="left:2.6px;top:94.4px;height:25.0px;background:#e3e3e3"><i style="background:#c0201f;opacity:1"></i><svg width="28" height="23" viewBox="0 0 28 23" style="position:absolute;left:0;top:0;opacity:1"><rect x="5.2" y="9.2" width="16" height="8.6" rx="4.3" fill="none" stroke="#f7941d" stroke-width=".9"/><circle cx="9.8" cy="13.5" r="2" fill="#2a9be6"/><circle cx="16.6" cy="13.5" r="2" fill="#2a9be6"/><circle cx="21.5" cy="4.3" r="2.9" fill="#f2f2f2" stroke="#7a7a7a" stroke-width=".8"/><circle cx="21.5" cy="4.3" r="1" fill="#7a7a7a"/></svg></div><div class="pbbtn" style="left:32.7px;top:94.4px;height:25.0px;background:#e3e3e3"><i style="background:#c0201f;opacity:1"></i><svg width="28" height="23" viewBox="0 0 28 23" style="position:absolute;left:0;top:0;opacity:1"><path d="M4.6 13.6 H21.6" stroke="#f7941d" stroke-width="1.2"/><circle cx="4.6" cy="13.6" r="2" fill="#2a9be6"/><circle cx="21.8" cy="13.6" r="2" fill="#2a9be6"/></svg></div><div class="pbbtn" style="left:62.8px;top:94.4px;height:25.0px;background:#e3e3e3"><i style="background:#c0201f;opacity:1"></i><svg width="28" height="23" viewBox="0 0 28 23" style="position:absolute;left:0;top:0;opacity:1"><path d="M2.6 12.8 L12 7.2 L23.6 8.8 L20.8 19.8 L6.4 18.6 Z" fill="#fff" stroke="#444" stroke-width=".8"/><path d="M9.4 13.8 L13.2 9.8 L19.4 11.6 L16.6 16 Z" fill="#2a9be6" stroke="#f7941d" stroke-width=".9"/><circle cx="21.6" cy="4.3" r="2.9" fill="#f2f2f2" stroke="#7a7a7a" stroke-width=".8"/><circle cx="21.6" cy="4.3" r="1" fill="#7a7a7a"/></svg></div><div class="pbbtn" style="left:92.9px;top:94.4px;height:25.0px;background:#e3e3e3"><i style="background:#c0201f;opacity:1"></i><svg width="28" height="23" viewBox="0 0 28 23" style="position:absolute;left:0;top:0;opacity:1"><path d="M9.6 9.2 H6.8 A4.3 4.3 0 0 0 6.8 17.8 H9.6" fill="none" stroke="#f7941d" stroke-width=".9"/><path d="M17 9.2 H19.8 A4.3 4.3 0 0 1 19.8 17.8 H17" fill="none" stroke="#f7941d" stroke-width=".9"/><circle cx="6.8" cy="13.5" r="2" fill="#2a9be6"/><circle cx="20" cy="13.5" r="2" fill="#2a9be6"/><path d="M11.4 8.6 L13.3 11.6 L15.2 8.6 M11.4 18.4 L13.3 15.4 L15.2 18.4" fill="none" stroke="#f7941d" stroke-width="1.1"/></svg></div><div class="pbbtn" style="left:123.0px;top:94.4px;height:25.0px;background:#e3e3e3"><i style="background:#c0201f;opacity:1"></i><svg width="28" height="23" viewBox="0 0 28 23" style="position:absolute;left:0;top:0;opacity:1"><circle cx="5" cy="13.6" r="2.2" fill="#2a9be6"/><circle cx="22.4" cy="13.6" r="2.2" fill="#2a9be6"/><path d="M7 13.6 H11.4 M15.8 13.6 H20.2" stroke="#f7941d" stroke-width="1.4"/><path d="M9.6 11 L12.6 13.6 L9.6 16.2 Z M17.8 11 L14.8 13.6 L17.8 16.2 Z" fill="#f7941d"/><circle cx="21.6" cy="4.3" r="2.9" fill="#f2f2f2" stroke="#7a7a7a" stroke-width=".8"/><circle cx="21.6" cy="4.3" r="1" fill="#7a7a7a"/></svg></div><div class="pbbtn" style="left:153.1px;top:94.4px;height:25.0px;background:#e3e3e3"><i style="background:#c0201f;opacity:1"></i><svg width="28" height="23" viewBox="0 0 28 23" style="position:absolute;left:0;top:0;opacity:1"><path d="M7.6 13.6 L7.6 9.1" stroke="#2bb24a" stroke-width="1.8"/><path d="M7.6 13.6 L4.1 17.1" stroke="#d2232a" stroke-width="1.8"/><path d="M7.6 13.6 L11.1 17.1" stroke="#2a9be6" stroke-width="1.8"/><path d="M13.4 9.4 L22 13.8 L13.4 18.4 Z" fill="none" stroke="#f7941d" stroke-width="1"/><g fill="#2a9be6"><circle cx="13.4" cy="9.4" r="1.6"/><circle cx="22" cy="13.8" r="1.6"/><circle cx="13.4" cy="18.4" r="1.6"/></g></svg></div><div class="pbbtn" style="left:183.2px;top:94.4px;height:25.0px;background:#e3e3e3"><i style="background:#c0201f;opacity:1"></i><svg width="28" height="23" viewBox="0 0 28 23" style="position:absolute;left:0;top:0;opacity:1"><path d="M3.4 17.6 L10 6.8 L16.4 10 L24.6 20.6 L22.6 21.4 L13.6 14 Z" fill="#fafafa" stroke="#333" stroke-width=".7"/><path d="M8 10 L12 7.8" stroke="#2a9be6" stroke-width="1"/><path d="M12 11 L23.4 21" stroke="#222" stroke-width="1.4"/></svg></div><div class="pbbtn" style="left:213.3px;top:94.4px;height:25.0px;background:#e3e3e3"><i style="background:#c0201f;opacity:1"></i><svg width="28" height="23" viewBox="0 0 28 23" style="position:absolute;left:0;top:0;opacity:1"><path d="M4.6 9.2 V18 M21.8 9.2 V18" stroke="#2a9be6" stroke-width="1.4"/><path d="M6 13.6 H18.4" stroke="#f7941d" stroke-width="1.4"/><path d="M17 10.8 L20.6 13.6 L17 16.4 Z" fill="#f7941d"/><circle cx="22" cy="4.3" r="2.9" fill="#f2f2f2" stroke="#7a7a7a" stroke-width=".8"/><circle cx="22" cy="4.3" r="1" fill="#7a7a7a"/></svg></div></div>
<div class="a win" style="left:565.5px;top:149.4px;width:126px;height:266.8px;background:#c2c2c2;border-radius:2px"><div class="a" style="left:0;top:0;width:126px;height:12.3px;background:#a6a6a6"></div><div class="a" style="left:0;top:0;width:56px;height:12.5px;background:#cbcbcb;font-size:7.6px;line-height:15px;padding-left:3px;color:#1e1e1e">Vertex Colors</div><div class="a" style="left:80.2px;top:4px;width:1.2px;height:1.2px;background:#444;box-shadow:0 2.2px #444,0 4.4px #444"></div><div class="a" style="left:87.9px;top:2.4px;width:7.4px;height:7.4px;border-radius:50%;background:#8b8b8b;border:.6px solid #777"></div><div class="a" style="left:99.6px;top:2.4px;width:7.4px;height:7.4px;border-radius:50%;background:#8b8b8b;border:.6px solid #777"></div><div class="a" style="left:111.4px;top:2.4px;width:7.4px;height:7.4px;border-radius:50%;background:#8b8b8b;border:.6px solid #777"></div><div class="a" style="left:0;top:12.3px;width:126px;height:12.3px;background:#cbcbcb;border-bottom:1px solid #b0b0b0"></div><div class="a" style="left:101.2px;top:12.3px;width:24.5px;height:12.3px;background:#dcdcdc;font-size:8px;line-height:12.5px;text-align:center;color:#1e1e1e">Reset</div><div class="a" style="left:2.8px;top:27px;font-size:8px;color:#2c5a98">Color Palette</div><div class="a" style="left:92.4px;top:26.2px;width:22.5px;height:10.5px;background:#e8e8e8;border-radius:1px;font-size:8px;line-height:10.8px;padding-left:7px;color:#1e1e1e">Def</div><svg class="a" style="left:93.4px;top:27.6px" width="7" height="8" viewBox="0 0 7 8"><circle cx="3.2" cy="3.8" r="2.8" fill="#dfe8f2" stroke="#4f7fc0" stroke-width=".8"/><path d="M1 3 Q3 2 5.5 3.5 M1.5 5.5 Q3 4.5 5 5.6" stroke="#4f7fc0" stroke-width=".6" fill="none"/><circle cx="5" cy="6" r="1.3" fill="#e8692a"/></svg><div class="a" style="left:117px;top:26.7px;width:8px;height:9px;background:#e8e8e8"></div><svg class="a" style="left:117.5px;top:27.5px" width="7" height="7" viewBox="0 0 7 7"><circle cx="3.5" cy="3.5" r="2.8" fill="none" stroke="#444" stroke-width=".8"/><path d="M2.6 2.4 L4.8 3.5 L2.6 4.6 Z" fill="#444"/></svg><div class="a" style="left:119.6px;top:38.5px;width:5.7px;height:227px;background:#b8b8b8"></div><div class="a" style="left:120.3px;top:47px;width:4.3px;height:205px;background:#9d9d9d;border-radius:2px"></div><div class="a" style="left:120.2px;top:40.4px;width:0;height:0;border-left:2.3px solid transparent;border-right:2.3px solid transparent;border-bottom:2.6px solid #333"></div><div class="a" style="left:120.2px;top:261px;width:0;height:0;border-left:2.3px solid transparent;border-right:2.3px solid transparent;border-top:2.6px solid #333"></div><div class="row" style="top:41.00px"><div class="ap">Apply</div><div class="sw"><i style="background:#2b2b2b"></i></div><div class="ey"><svg width="8.4" height="9.4" viewBox="0 0 8.4 9.4" style="display:block"><path d="M1.4 8 L5.4 4" stroke="#2a2a2a" stroke-width="1.2"/><path d="M4.4 3.4 L6 1.6 A1.2 1.2 0 0 1 7.4 3 L5.6 4.6 Z" fill="#2a2a2a"/></svg></div></div><div class="row" style="top:55.77px"><div class="ap">Apply</div><div class="sw"><i style="background:#0c6fe0"></i></div><div class="ey"><svg width="8.4" height="9.4" viewBox="0 0 8.4 9.4" style="display:block"><path d="M1.4 8 L5.4 4" stroke="#2a2a2a" stroke-width="1.2"/><path d="M4.4 3.4 L6 1.6 A1.2 1.2 0 0 1 7.4 3 L5.6 4.6 Z" fill="#2a2a2a"/></svg></div></div><div class="row" style="top:70.54px"><div class="ap">Apply</div><div class="sw"><i style="background:#82d9fb"></i></div><div class="ey"><svg width="8.4" height="9.4" viewBox="0 0 8.4 9.4" style="display:block"><path d="M1.4 8 L5.4 4" stroke="#2a2a2a" stroke-width="1.2"/><path d="M4.4 3.4 L6 1.6 A1.2 1.2 0 0 1 7.4 3 L5.6 4.6 Z" fill="#2a2a2a"/></svg></div></div><div class="row" style="top:85.31px"><div class="ap">Apply</div><div class="sw"><i style="background:#27c4d0"></i></div><div class="ey"><svg width="8.4" height="9.4" viewBox="0 0 8.4 9.4" style="display:block"><path d="M1.4 8 L5.4 4" stroke="#2a2a2a" stroke-width="1.2"/><path d="M4.4 3.4 L6 1.6 A1.2 1.2 0 0 1 7.4 3 L5.6 4.6 Z" fill="#2a2a2a"/></svg></div></div><div class="row" style="top:100.08px"><div class="ap">Apply</div><div class="sw"><i style="background:#2f9a6c"></i></div><div class="ey"><svg width="8.4" height="9.4" viewBox="0 0 8.4 9.4" style="display:block"><path d="M1.4 8 L5.4 4" stroke="#2a2a2a" stroke-width="1.2"/><path d="M4.4 3.4 L6 1.6 A1.2 1.2 0 0 1 7.4 3 L5.6 4.6 Z" fill="#2a2a2a"/></svg></div></div><div class="row" style="top:114.85px"><div class="ap">Apply</div><div class="sw"><i style="background:#22c440"></i></div><div class="ey"><svg width="8.4" height="9.4" viewBox="0 0 8.4 9.4" style="display:block"><path d="M1.4 8 L5.4 4" stroke="#2a2a2a" stroke-width="1.2"/><path d="M4.4 3.4 L6 1.6 A1.2 1.2 0 0 1 7.4 3 L5.6 4.6 Z" fill="#2a2a2a"/></svg></div></div><div class="row" style="top:129.62px"><div class="ap">Apply</div><div class="sw"><i style="background:#29ef6c"></i></div><div class="ey"><svg width="8.4" height="9.4" viewBox="0 0 8.4 9.4" style="display:block"><path d="M1.4 8 L5.4 4" stroke="#2a2a2a" stroke-width="1.2"/><path d="M4.4 3.4 L6 1.6 A1.2 1.2 0 0 1 7.4 3 L5.6 4.6 Z" fill="#2a2a2a"/></svg></div></div><div class="row" style="top:144.39px"><div class="ap">Apply</div><div class="sw"><i style="background:#ffd50c"></i></div><div class="ey"><svg width="8.4" height="9.4" viewBox="0 0 8.4 9.4" style="display:block"><path d="M1.4 8 L5.4 4" stroke="#2a2a2a" stroke-width="1.2"/><path d="M4.4 3.4 L6 1.6 A1.2 1.2 0 0 1 7.4 3 L5.6 4.6 Z" fill="#2a2a2a"/></svg></div></div><div class="row" style="top:159.16px"><div class="ap">Apply</div><div class="sw"><i style="background:#ff6a12"></i></div><div class="ey"><svg width="8.4" height="9.4" viewBox="0 0 8.4 9.4" style="display:block"><path d="M1.4 8 L5.4 4" stroke="#2a2a2a" stroke-width="1.2"/><path d="M4.4 3.4 L6 1.6 A1.2 1.2 0 0 1 7.4 3 L5.6 4.6 Z" fill="#2a2a2a"/></svg></div></div><div class="row" style="top:173.93px"><div class="ap">Apply</div><div class="sw"><i style="background:#fd4040"></i></div><div class="ey"><svg width="8.4" height="9.4" viewBox="0 0 8.4 9.4" style="display:block"><path d="M1.4 8 L5.4 4" stroke="#2a2a2a" stroke-width="1.2"/><path d="M4.4 3.4 L6 1.6 A1.2 1.2 0 0 1 7.4 3 L5.6 4.6 Z" fill="#2a2a2a"/></svg></div></div><div class="row" style="top:188.70px"><div class="ap">Apply</div><div class="sw"><i style="background:#7c1440"></i></div><div class="ey"><svg width="8.4" height="9.4" viewBox="0 0 8.4 9.4" style="display:block"><path d="M1.4 8 L5.4 4" stroke="#2a2a2a" stroke-width="1.2"/><path d="M4.4 3.4 L6 1.6 A1.2 1.2 0 0 1 7.4 3 L5.6 4.6 Z" fill="#2a2a2a"/></svg></div></div><div class="row" style="top:203.47px"><div class="ap">Apply</div><div class="sw"><i style="background:#f23cbe"></i></div><div class="ey"><svg width="8.4" height="9.4" viewBox="0 0 8.4 9.4" style="display:block"><path d="M1.4 8 L5.4 4" stroke="#2a2a2a" stroke-width="1.2"/><path d="M4.4 3.4 L6 1.6 A1.2 1.2 0 0 1 7.4 3 L5.6 4.6 Z" fill="#2a2a2a"/></svg></div></div><div class="row" style="top:218.24px"><div class="ap">Apply</div><div class="sw"><i style="background:#a93bd0"></i></div><div class="ey"><svg width="8.4" height="9.4" viewBox="0 0 8.4 9.4" style="display:block"><path d="M1.4 8 L5.4 4" stroke="#2a2a2a" stroke-width="1.2"/><path d="M4.4 3.4 L6 1.6 A1.2 1.2 0 0 1 7.4 3 L5.6 4.6 Z" fill="#2a2a2a"/></svg></div></div><div class="row" style="top:233.01px"><div class="ap">Apply</div><div class="sw"><i style="background:#2a2727"></i></div><div class="ey"><svg width="8.4" height="9.4" viewBox="0 0 8.4 9.4" style="display:block"><path d="M1.4 8 L5.4 4" stroke="#2a2a2a" stroke-width="1.2"/><path d="M4.4 3.4 L6 1.6 A1.2 1.2 0 0 1 7.4 3 L5.6 4.6 Z" fill="#2a2a2a"/></svg></div></div><div class="row" style="top:247.78px"><div class="ap">Apply</div><div class="sw"><i style="background:#b6b6b6"></i></div><div class="ey"><svg width="8.4" height="9.4" viewBox="0 0 8.4 9.4" style="display:block"><path d="M1.4 8 L5.4 4" stroke="#2a2a2a" stroke-width="1.2"/><path d="M4.4 3.4 L6 1.6 A1.2 1.2 0 0 1 7.4 3 L5.6 4.6 Z" fill="#2a2a2a"/></svg></div></div><div class="row" style="top:262.55px"><div class="ap">Apply</div><div class="sw"><i style="background:#e0e0e0"></i></div><div class="ey"><svg width="8.4" height="9.4" viewBox="0 0 8.4 9.4" style="display:block"><path d="M1.4 8 L5.4 4" stroke="#2a2a2a" stroke-width="1.2"/><path d="M4.4 3.4 L6 1.6 A1.2 1.2 0 0 1 7.4 3 L5.6 4.6 Z" fill="#2a2a2a"/></svg></div></div></div>
<div class="a" style="left:610.6px;top:440.6px;width:127.4px;height:32px;background:#b0b0b0;border-radius:2px;box-shadow:0 1px 2px rgba(0,0,0,.3)">
<div class="a" style="left:0;top:2.6px;width:127.4px;text-align:center;font-size:8.2px;color:#1e1e1e">Tools</div>
<div class="a" style="left:2.6px;top:14.2px;width:17.8px;height:12px;background:#e2e2e2;border-radius:1px"></div>
<svg class="a" style="left:6px;top:15.5px" width="11" height="10" viewBox="0 0 11 10"><path d="M2 8 C1 3 5 1 8 3 C10 5 9 8 8 8 M4 8 C3 5 5 4 6.5 5 C7.5 6 7 8 6 8" fill="none" stroke="#333" stroke-width=".9"/></svg>
</div>
</body></html>
